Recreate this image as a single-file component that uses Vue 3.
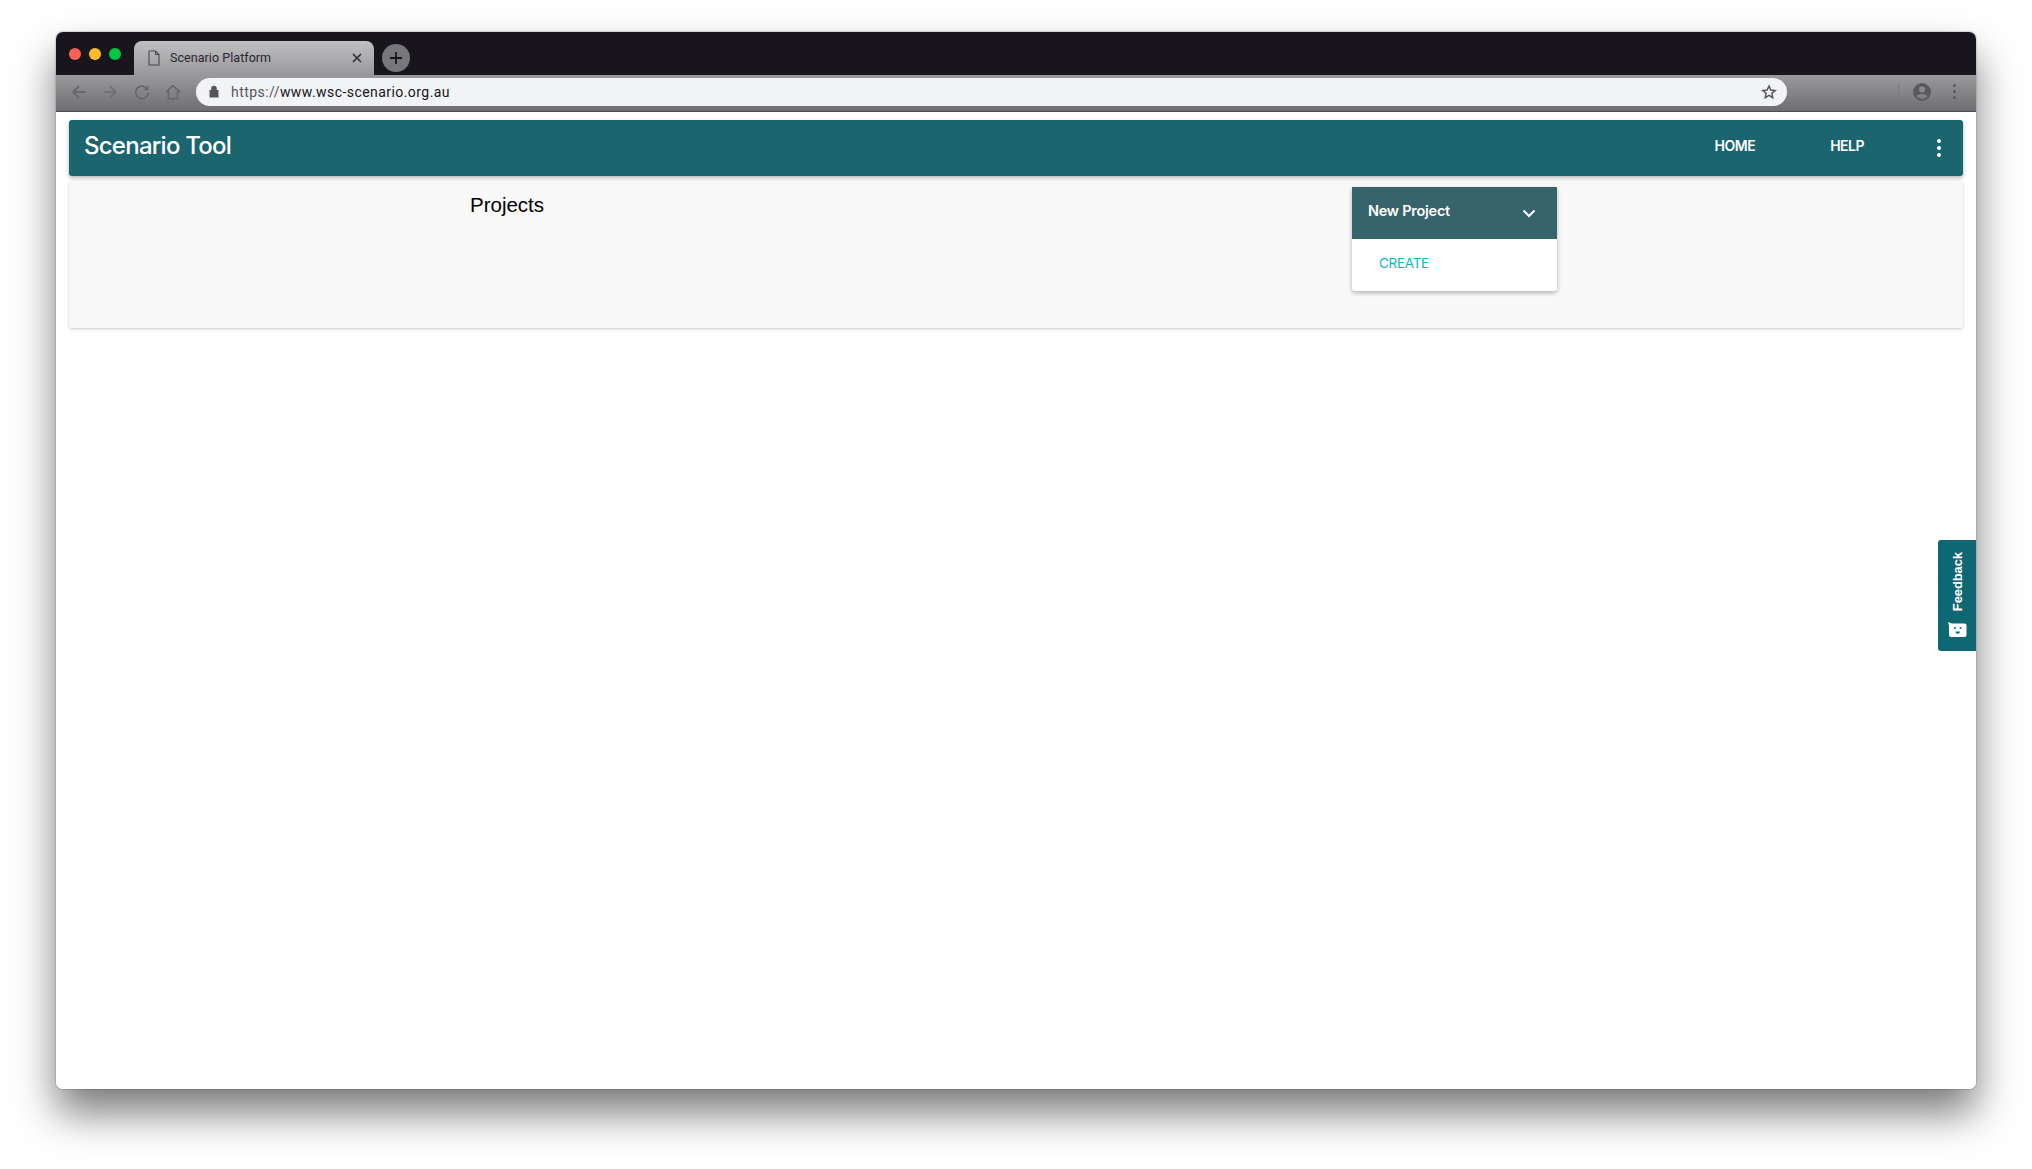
<script setup>
const traffic = ['#ff5f57', '#febc2e', '#00c846']
</script>

<template>
  <div class="page">
    <div class="window">
      <div class="titlebar">
        <div class="dots">
          <span v-for="c in traffic" :key="c" class="dot" :style="{ background: c }"></span>
        </div>
        <div class="tab">
          <svg class="doc" width="12" height="16" viewBox="0 0 12 16" fill="none" stroke="#4a4a4e" stroke-width="1.1">
            <path d="M1 1h6.5L11 4.5V15H1z" /><path d="M7.5 1v3.5H11" />
          </svg>
          <span class="tab-title">Scenario Platform</span>
          <svg class="close" width="10" height="10" viewBox="0 0 10 10" stroke="#2c2c30" stroke-width="1.6">
            <path d="M1 1l8 8M9 1l-8 8" />
          </svg>
        </div>
        <div class="newtab">
          <svg width="14" height="14" viewBox="0 0 14 14" stroke="#17161b" stroke-width="1.8"><path d="M7 1v12M1 7h12" /></svg>
        </div>
      </div>
      <div class="toolbar">
        <div class="navs">
          <svg width="18" height="18" viewBox="0 0 20 20" fill="none" stroke="#68686c" stroke-width="2"><path d="M17 10H4M10 3.5L3.5 10l6.500 6.500" /></svg>
          <svg width="18" height="18" viewBox="0 0 20 20" fill="none" stroke="#727276" stroke-width="2"><path d="M3 10h13M10 3.500l6.500 6.500-6.500 6.500" /></svg>
          <svg width="18" height="18" viewBox="0 0 20 20" fill="none" stroke="#68686c" stroke-width="2"><path d="M15.500 6A7 7 0 1 0 17 11" /><path d="M17 2.500V8h-5.500z" fill="#68686c" stroke="none" /></svg>
          <svg width="18" height="18" viewBox="0 0 20 20" fill="none" stroke="#68686c" stroke-width="1.800"><path d="M2 10.500L10 3l8 7.500M5 9v8.500h10V9" /></svg>
        </div>
        <div class="omnibox">
          <svg width="10" height="13" viewBox="0 0 10 13"><path d="M2.200 5V3.500a2.800 2.800 0 0 1 5.600 0V5H9.500v7.500h-9V5z" fill="#55555a" /></svg>
          <span class="url"><span class="scheme">https://</span>www.wsc-scenario.org.au</span>
          <svg class="star" width="16" height="16" viewBox="0 0 24 24" fill="none" stroke="#55555a" stroke-width="2.200"><path d="M12 3l2.700 6 6.500.7-4.900 4.300 1.400 6.500L12 17.200 6.300 20.500l1.400-6.500-4.900-4.300 6.500-.7z" /></svg>
        </div>
        <div class="tool-right">
          <span class="divider"></span>
          <svg width="18" height="18" viewBox="0 0 18 18"><path fill="#5a5a5e" fill-rule="evenodd" d="M9 0a9 9 0 1 1 0 18A9 9 0 0 1 9 0zm0 3.500a3 3 0 1 0 0 6 3 3 0 0 0 0-6zM9 16a7 7 0 0 0 5.700-3C13.500 11.800 11.300 11 9 11s-4.500.8-5.700 2A7 7 0 0 0 9 16z" /></svg>
          <span class="kebab-grey"><i></i><i></i><i></i></span>
        </div>
      </div>

      <div class="content">
        <header class="appbar">
          <h1 class="brand">Scenario Tool</h1>
          <nav class="links">
            <a class="home">HOME</a>
            <a class="help">HELP</a>
            <span class="kebab"><i></i><i></i><i></i></span>
          </nav>
        </header>
        <section class="card">
          <h2 class="projects">Projects</h2>
          <div class="panel">
            <div class="panel-head">
              <span>New Project</span>
              <svg width="14" height="9" viewBox="0 0 14 9" fill="none" stroke="#fff" stroke-width="2"><path d="M1.500 1.500L7 7l5.500-5.500" /></svg>
            </div>
            <div class="panel-body"><a class="create">CREATE</a></div>
          </div>
        </section>
        <aside class="feedback">
          <span class="fb-text">Feedback</span>
          <svg width="20" height="15" viewBox="0 0 20 15">
            <path fill="#fff" d="M1 0l4 1.500h12.500a2 2 0 0 1 2 2V13a2 2 0 0 1-2 2H4a2 2 0 0 1-2-2V4z" />
            <circle cx="8" cy="6" r="1" fill="#0f6774" /><circle cx="13.500" cy="6" r="1" fill="#0f6774" />
            <path fill="#0f6774" d="M8.500 9.500h4.500a2.200 2.200 0 0 1-4.500 0z" />
          </svg>
        </aside>
      </div>
    </div>
  </div>
</template>

<style>
html, body { margin: 0; background: #fff; overflow: hidden; }
</style>

<style scoped>
.page {
  width: 2032px;
  height: 1169px;
  box-sizing: border-box;
  padding: 32px 56px 80px;
  background: #fff;
  overflow: hidden;
  font-family: Roboto, "Liberation Sans", sans-serif;
}
.window {
  height: 100%;
  display: flex;
  flex-direction: column;
  border-radius: 7px;
  overflow: visible;
  box-shadow: 0 0 2px rgba(0, 0, 0, 0.45), 0 24px 42px rgba(0, 0, 0, 0.52);
  background: #fff;
}
.titlebar {
  height: 43px;
  flex: none;
  background: #18161c;
  border-radius: 7px 7px 0 0;
  display: flex;
  align-items: flex-end;
  padding-left: 13px;
  box-sizing: border-box;
}
.dots {
  display: flex;
  gap: 8px;
  align-self: flex-start;
  margin-top: 16px;
  width: 65px;
}
.dot { width: 12px; height: 12px; border-radius: 50%; }
.tab {
  width: 240px;
  height: 34px;
  box-sizing: border-box;
  padding: 0 12px 0 14px;
  display: flex;
  align-items: center;
  border-radius: 8px 8px 0 0;
  background: linear-gradient(#c0bfc2, #98979a);
}
.tab-title {
  margin: -1px 0 0 10px;
  flex: 1;
  font-size: 12.5px;
  letter-spacing: 0.05px;
  color: #2a2630;
}
.newtab {
  width: 28px;
  height: 28px;
  margin: 0 0 3px 8px;
  border-radius: 50%;
  background: #77777b;
  display: flex;
  align-items: center;
  justify-content: center;
}
.toolbar {
  height: 37px;
  flex: none;
  box-sizing: border-box;
  display: flex;
  align-items: center;
  background: linear-gradient(#9a999c, #6e6d71);
  border-bottom: 1px solid #4c4b4e;
  padding: 0 20px 3px 0;
}
.navs {
  width: 140px;
  box-sizing: border-box;
  padding: 0 14px 0 14px;
  display: flex;
  justify-content: space-between;
  flex: none;
}
.omnibox {
  width: 1591px;
  height: 28px;
  flex: none;
  box-sizing: border-box;
  padding: 0 10px 0 13px;
  border-radius: 14px;
  background: #f1f3f5;
  display: flex;
  align-items: center;
  gap: 12px;
}
.url { flex: 1; font-size: 14px; letter-spacing: 0.44px; color: #17161b; padding-top: 1px; }
.scheme { color: #55555a; }
.tool-right { flex: 1; display: flex; align-items: center; justify-content: flex-end; }
.divider { width: 1px; height: 16px; background: #7c7b7f; margin-right: 14px; }
.kebab-grey { display: flex; flex-direction: column; gap: 3px; margin-left: 22px; }
.kebab-grey i { width: 3px; height: 3px; border-radius: 50%; background: #5a5a5e; }

.content {
  position: relative;
  flex: 1;
  background: #fff;
  padding: 8px 13px 0;
  border-radius: 0 0 7px 7px;
}
.appbar {
  height: 56px;
  box-sizing: border-box;
  display: flex;
  align-items: center;
  justify-content: space-between;
  padding: 0 22px 5px 15px;
  background: #1b656e;
  border-radius: 3px;
  box-shadow: 0 2px 4px rgba(0, 0, 0, 0.3);
}
.brand {
  margin: 0;
  font: 500 24px Inter, Roboto, sans-serif;
  letter-spacing: -0.75px;
  color: #fff;
}
.links {
  display: flex;
  align-items: center;
  font: 600 14px Inter, Roboto, sans-serif;
  letter-spacing: -0.5px;
  color: #fff;
}
.help { margin-left: 75px; }
.kebab { display: flex; flex-direction: column; gap: 3px; margin: 5px 0 0 73px; }
.kebab i { width: 4px; height: 4px; border-radius: 50%; background: #fff; }
.card {
  margin-top: 5px;
  height: 147px;
  position: relative;
  box-sizing: border-box;
  padding: 6px 0 0 401px;
  display: flex;
  align-items: flex-start;
  background: #f8f8f8;
  border-radius: 3px;
  box-shadow: 0 1px 3px rgba(0, 0, 0, 0.22);
}
.projects {
  margin: 6px 0 0;
  width: 882px;
  font: 400 20.5px "Liberation Sans", Arial, sans-serif;
  color: #000;
}
.panel {
  width: 205px;
  border-radius: 0 0 3px 3px;
  background: #fff;
  box-shadow: 0 2px 4px rgba(0, 0, 0, 0.28);
}
.panel-head {
  height: 52px;
  box-sizing: border-box;
  padding: 0 21px 0 16px;
  display: flex;
  align-items: center;
  justify-content: space-between;
  background: #37636b;
  color: #fff;
  font: 600 14.5px Inter, Roboto, sans-serif;
  letter-spacing: -0.25px;
}
.panel-head span { margin-top: -5px; }
.panel-body {
  height: 52px;
  box-sizing: border-box;
  padding: 0 0 4px 27px;
  display: flex;
  align-items: center;
}
.create {
  font: 400 13.5px Inter, Roboto, sans-serif;
  letter-spacing: -0.3px;
  color: #14b5c9;
}
.feedback {
  position: absolute;
  right: 0;
  top: 428px;
  width: 38px;
  height: 111px;
  box-sizing: border-box;
  padding: 12px 0 14px;
  display: flex;
  flex-direction: column;
  align-items: center;
  justify-content: space-between;
  background: #0f6774;
  border-radius: 3px 0 0 3px;
}
.fb-text {
  writing-mode: vertical-rl;
  transform: rotate(180deg);
  font: 700 13px "Liberation Sans", Arial, sans-serif;
  letter-spacing: -0.1px;
  color: #fff;
}
</style>
